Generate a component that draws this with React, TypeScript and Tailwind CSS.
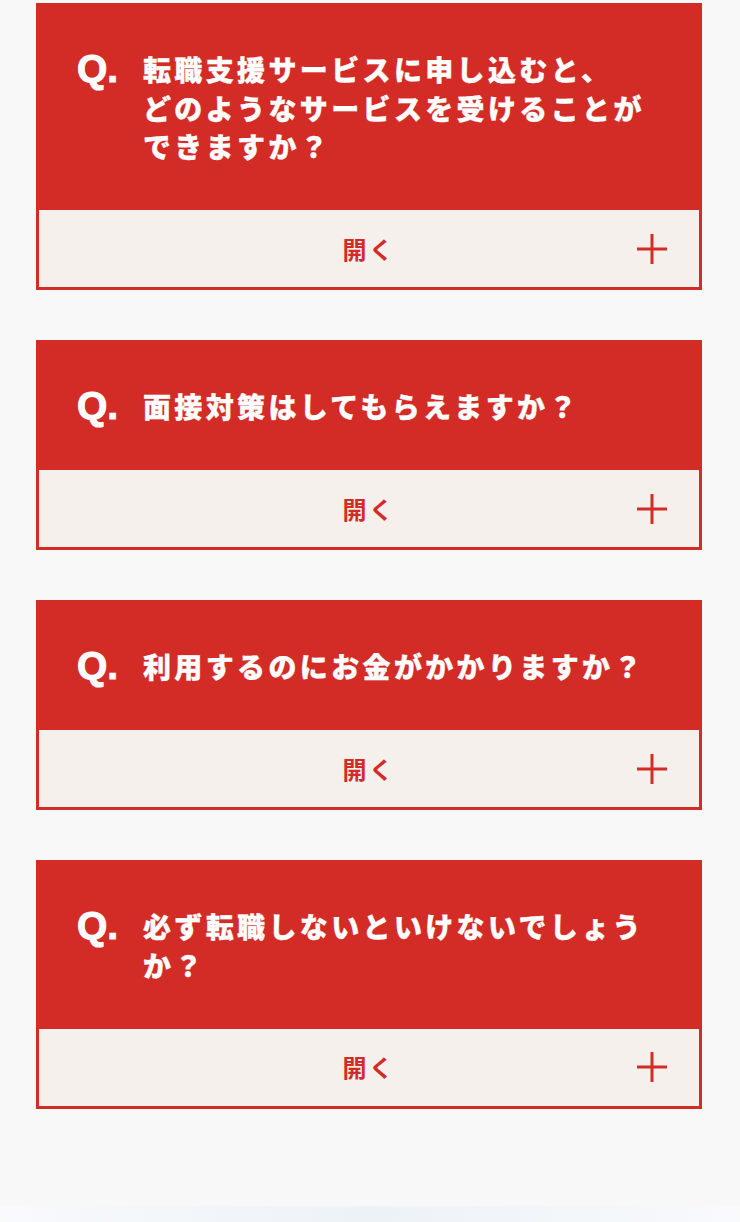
import React from "react";

const faqs: string[][] = [
  ["転職支援サービスに申し込むと、", "どのようなサービスを受けることが", "できますか？"],
  ["面接対策はしてもらえますか？"],
  ["利用するのにお金がかかりますか？"],
  ["必ず転職しないといけないでしょう", "か？"],
];

function PlusIcon() {
  return (
    <svg width="30" height="30" viewBox="0 0 30 30" aria-hidden="true">
      <rect x="13.5" y="0" width="3" height="30" fill="#d32c27" />
      <rect x="0" y="13.5" width="30" height="3" fill="#d32c27" />
    </svg>
  );
}

function FaqCard({ lines }: { lines: string[] }) {
  return (
    <div className="w-[666px] border-[3px] border-[#d32c27] bg-[#d32c27]">
      <div className="flex items-start pl-[38px] pr-[20px] pt-[44px] pb-[44.5px]">
        <div
          className="w-[66px] shrink-0 text-[39px] font-bold leading-[38px] text-white [-webkit-text-stroke:1px_white]"
          style={{ fontFamily: '"Liberation Sans", Arial, sans-serif' }}
        >
          Q.
        </div>
        <p
          className="whitespace-nowrap text-[28px] font-black leading-[38.5px] tracking-[0.12em] text-white [-webkit-text-stroke:0.3px_white]"
          style={{ fontFamily: '"Noto Sans CJK JP", "Noto Sans", sans-serif' }}
        >
          {lines.map((l, i) => (
            <React.Fragment key={i}>
              {l}
              {i < lines.length - 1 && <br />}
            </React.Fragment>
          ))}
        </p>
      </div>
      <div className="grid h-[77px] grid-cols-[1fr_auto_1fr] items-center bg-[#f5f0ec]">
        <div />
        <span
          className="text-[24px] font-bold leading-none tracking-[0.1em] text-[#d32c27]"
          style={{ fontFamily: '"Noto Sans CJK JP", "Noto Sans", sans-serif' }}
        >
          開く
        </span>
        <div className="flex justify-end pr-[32px]">
          <PlusIcon />
        </div>
      </div>
    </div>
  );
}

export default function App() {
  return (
    <div className="min-h-[1222px] w-full bg-[#f8f8f8]">
      <div className="flex flex-col items-start gap-[50px] pl-[36px] pt-[3px] pb-[97px]">
        {faqs.map((f, i) => (
          <FaqCard key={i} lines={f} />
        ))}
      </div>
      <div className="h-[20px] w-full bg-gradient-to-r from-[#f8fafc] via-[#edf2f7] to-[#f8fafc]" />
    </div>
  );
}
